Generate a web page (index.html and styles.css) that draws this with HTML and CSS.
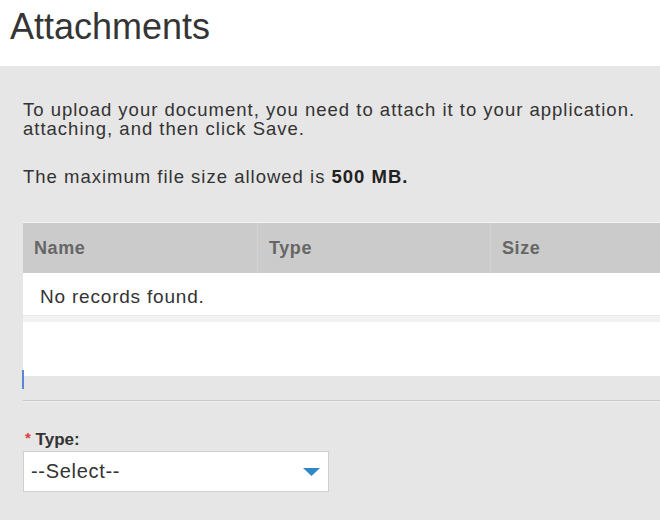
FILE: index.html
```html
<!DOCTYPE html>
<html lang="en">
<head>
<meta charset="utf-8">
<title>Attachments</title>
<link rel="stylesheet" href="styles.css">
</head>
<body>
<h1 class="title">Attachments</h1>
<section class="panel">
  <p class="intro">To upload your document, you need to attach it to your application.<br>attaching, and then click Save.</p>
  <p class="limit">The maximum file size allowed is <b>500 MB.</b></p>
  <div class="grid-wrap">
    <div class="grid">
      <div class="grid-head">
        <div class="col">Name</div>
        <div class="col">Type</div>
        <div class="col">Size</div>
        <div class="col"></div>
      </div>
      <div class="grid-row">No records found.</div>
      <div class="grid-sep"></div>
      <div class="grid-blank"></div>
    </div>
    <div class="grid-foot"></div>
    <span class="caret"></span>
  </div>
  <div class="field">
    <label class="label"><span class="req">*</span> Type:</label>
    <div class="select">
      <span class="select-text">--Select--</span>
      <svg class="select-arrow" width="17" height="8" viewBox="0 0 17 8"><path d="M0 0H17L8.5 8Z" fill="#2f89c6"/></svg>
    </div>
  </div>
</section>
</body>
</html>
```
FILE: styles.css
```css
html, body {
  margin: 0;
  padding: 0;
}
body {
  width: 660px;
  height: 522px;
  overflow: hidden;
  background: #ffffff;
  font-family: "Liberation Sans", Arial, sans-serif;
  color: #333333;
}
.title {
  margin: 0 0 18px 0;
  padding: 6px 0 0 10px;
  font-size: 36px;
  line-height: 42px;
  font-weight: normal;
  color: #353535;
}
.panel {
  width: 1000px;
  height: 454px;
  box-sizing: border-box;
  background: #e6e6e6;
  padding: 34px 0 0 23px;
}
.intro, .limit {
  margin: 0;
  font-size: 18.5px;
  letter-spacing: 1px;
  line-height: 19px;
  white-space: nowrap;
  color: #333333;
}
.limit {
  margin-top: 29px;
}
.limit b {
  color: #222;
}
.grid-wrap {
  position: relative;
  margin-top: 36px;
  width: 977px;
}
.grid {
  border-top: 1px solid #f4f4f4;
}
.grid-head {
  display: grid;
  grid-template-columns: 234px 233px 233px 1fr;
  background: #cbcbcb;
  height: 50px;
}
.col {
  padding-left: 11px;
  font-size: 18px;
  font-weight: bold;
  letter-spacing: 0.6px;
  line-height: 50px;
  color: #666666;
}
.col + .col {
  border-left: 1px solid #d3d3d3;
}
.grid-row {
  background: #ffffff;
  height: 42px;
  box-sizing: border-box;
  padding: 6px 0 0 17px;
  font-size: 19px;
  letter-spacing: 0.8px;
  line-height: 36px;
  color: #333333;
}
.grid-sep {
  height: 7px;
  background: #f2f2f2;
  border-top: 1px solid #ebebeb;
  box-sizing: border-box;
}
.grid-blank {
  height: 54px;
  background: #ffffff;
}
.grid-foot {
  height: 24px;
  border-bottom: 1px solid #c8c8c8;
  box-shadow: 0 1px 0 #efefef;
}
.caret {
  position: absolute;
  left: -1px;
  top: 148px;
  width: 2px;
  height: 19px;
  background: #5a88d6;
}
.field {
  margin-top: 27px;
}
.label {
  display: block;
  font-size: 17px;
  font-weight: bold;
  line-height: 20px;
  color: #333333;
  margin-bottom: 1px;
  padding-left: 2px;
}
.req {
  color: #e03a3a;
  font-size: 15px;
  vertical-align: 2px;
}
.select {
  display: flex;
  align-items: center;
  justify-content: space-between;
  width: 306px;
  height: 41px;
  box-sizing: border-box;
  background: #ffffff;
  border: 1px solid #cfcfcf;
  padding: 0 8px 0 7px;
}
.select-text {
  font-size: 20px;
  letter-spacing: 0.7px;
  color: #333333;
}
.select-arrow {
  display: block;
}
```
